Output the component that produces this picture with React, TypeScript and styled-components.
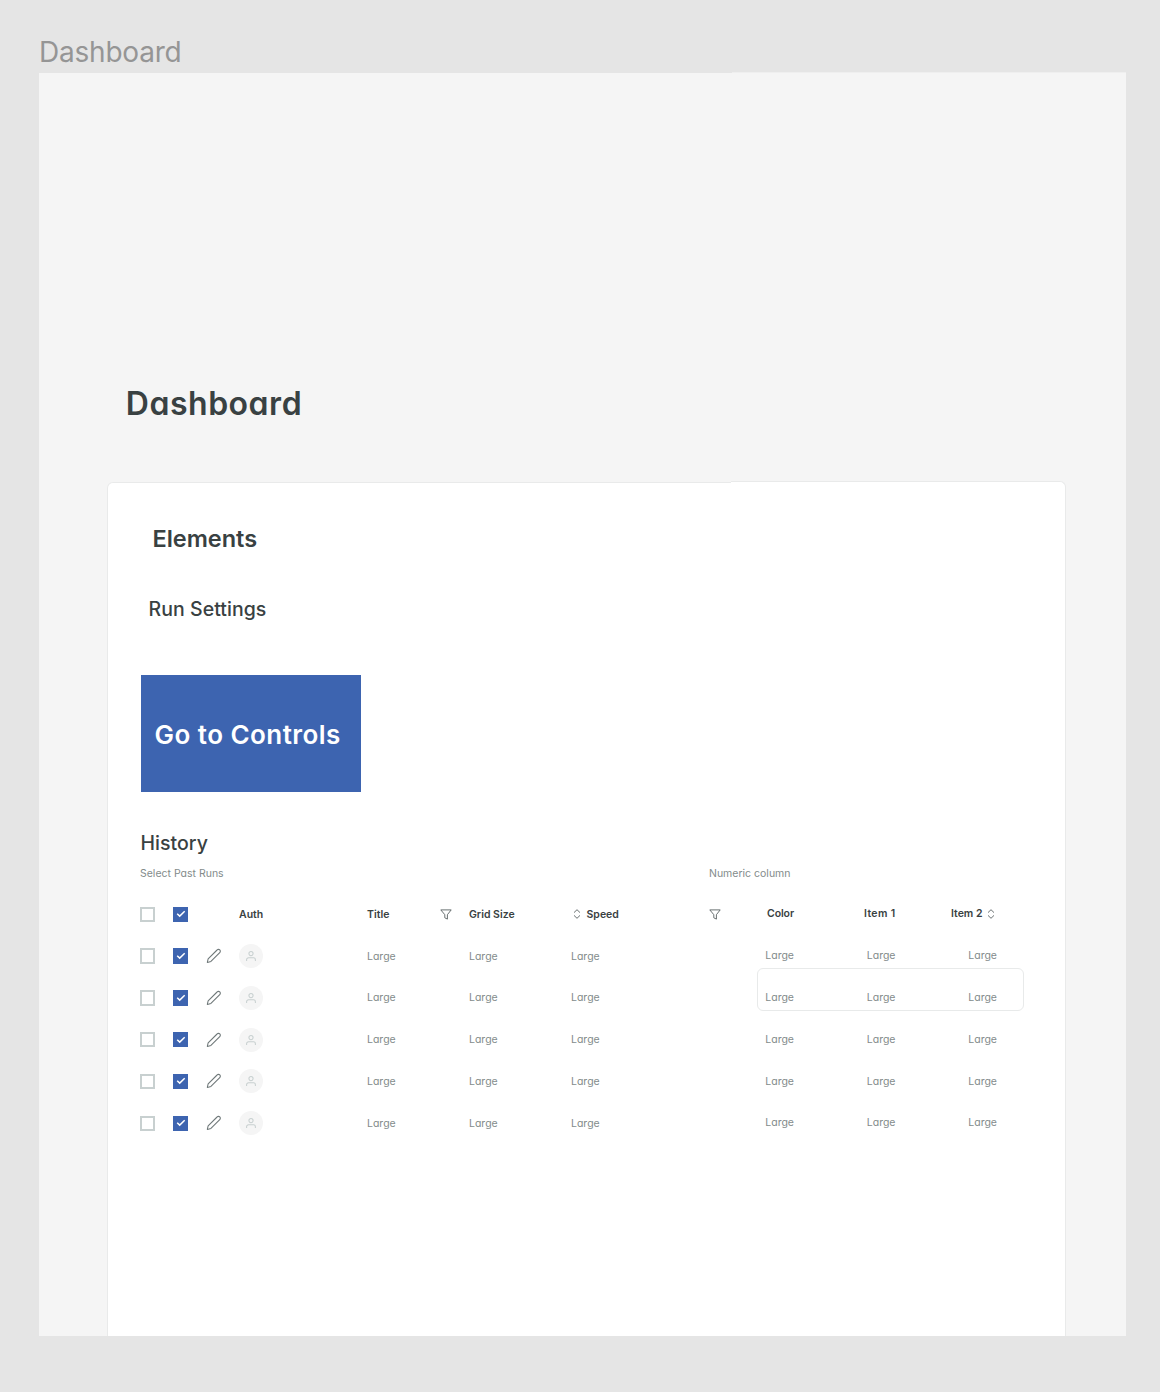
import React from "react";
import styled, { createGlobalStyle } from "styled-components";

const color = {
  canvas: "#e5e5e5",
  frame: "#f5f5f5",
  ink: "#394142",
  muted: "#838b8b",
  line: "#e9eaea",
  outline: "#c8d0d0",
  brand: "#3d64b0",
};

const GlobalStyle = createGlobalStyle`
  body {
    margin: 0;
    background: ${color.canvas};
    color: ${color.ink};
    font-family: Inter, "Open Sans", sans-serif;
  }
  * { box-sizing: border-box; }
  svg { display: block; flex: none; fill: none; }
`;

const Canvas = styled.main`
  width: 1160px;
  height: 1392px;
  padding: 35px 0 0 39px;
  overflow: hidden;
`;

const FrameLabel = styled.div`
  height: 38px;
  font-size: 28px;
  line-height: 34px;
  letter-spacing: -0.22px;
  color: #959595;
`;

const Frame = styled.section`
  position: relative;
  display: flex;
  flex-direction: column;
  width: 1086.5px;
  height: 1263px;
  padding: 310.5px 0 0 68px;
  background: ${color.frame};
  font-feature-settings: "cv11" 1;

  &::before {
    content: "";
    position: absolute;
    top: -1px;
    right: 0;
    width: 394px;
    height: 1px;
    background: #efefef;
  }
`;

const PageTitle = styled.h1`
  margin: 0 0 58.5px 18.8px;
  font-size: 32px;
  font-weight: 600;
  line-height: 40px;
  letter-spacing: 0.52px;
`;

const Card = styled.div`
  position: relative;
  flex: 1;
  width: 959px;
  padding: 41px 0 0 32px;
  background: #fff;
  border: 1px solid ${color.line};
  border-bottom: 0;
  border-radius: 6px 6px 0 0;

  &::before {
    content: "";
    position: absolute;
    top: -2px;
    right: -1px;
    width: 334px;
    height: 8px;
    background: #fff;
    border: solid ${color.line};
    border-width: 1px 1px 0 0;
    border-radius: 0 6px 0 0;
  }
`;

const SectionTitle = styled.h2`
  margin: 0 0 42.6px 12.5px;
  font-size: 23.5px;
  font-weight: 600;
  line-height: 30px;
  letter-spacing: -0.02px;
`;

const SubTitle = styled.h3<{ $indent?: number }>`
  margin: 0 0 0 ${(p) => p.$indent ?? 0}px;
  font-size: 19.5px;
  font-weight: 500;
  line-height: 24px;
  letter-spacing: 0.04px;
`;

const PrimaryButton = styled.button`
  display: block;
  width: 220px;
  height: 117.4px;
  margin: 54px 0 39.2px 1px;
  padding: 3px 0 0 13.6px;
  border: 0;
  background: ${color.brand};
  color: #fff;
  font: 600 26px/32px Inter, sans-serif;
  font-feature-settings: "cv11" 1;
  letter-spacing: 0.45px;
  text-align: left;
`;

const Captions = styled.div`
  display: grid;
  grid-template-columns: 569px 1fr;
  margin: 12px 0 12.2px;
  font-size: 10.5px;
  line-height: 14px;
  color: ${color.muted};
`;

const Caption = styled.span<{ $raised?: boolean }>`
  margin-top: ${(p) => (p.$raised ? -0.6 : 0)}px;
`;

const Table = styled.div`
  position: relative;
`;

const Row = styled.div<{ $head?: boolean }>`
  display: grid;
  grid-template-columns: 33px 33px 33px 128px 73px 29px 102px 138px 48px 37px 101.5px 101.5px;
  align-items: center;
  height: 41.8px;
  font-size: 10.5px;
  line-height: 14px;
  font-weight: ${(p) => (p.$head ? 600 : 400)};
  color: ${(p) => (p.$head ? color.ink : color.muted)};
`;

const Cell = styled.div<{ $start?: number }>`
  display: flex;
  align-items: center;
  gap: 3.5px;
  grid-column-start: ${(p) => p.$start ?? "auto"};
`;

const Label = styled.span`
  margin-top: 1.2px;
`;

const NumericCell = styled(Cell)<{ $spacing?: number }>`
  justify-content: flex-end;
  gap: 2.5px;
  padding-bottom: 1px;
  white-space: nowrap;
  letter-spacing: ${(p) => p.$spacing ?? 0}px;
`;

const Box = styled.span<{ $checked?: boolean }>`
  display: grid;
  place-items: center;
  width: 15.4px;
  height: 15.4px;
  border: 2px solid ${(p) => (p.$checked ? color.brand : color.outline)};
  background: ${(p) => (p.$checked ? color.brand : "#fff")};
`;

const Avatar = styled.span`
  display: grid;
  place-items: center;
  width: 24px;
  height: 24px;
  border-radius: 50%;
  background: ${color.frame};
`;

const Selection = styled.div`
  position: absolute;
  top: 74.8px;
  left: 617px;
  width: 267px;
  height: 43px;
  border: 1px solid #e8eaea;
  border-radius: 6px;
`;

const Check = () => (
  <svg width="10" height="8" viewBox="0 0 10 8" stroke="#fff" strokeWidth="1.5">
    <path d="M1.2 3.7l2.5 2.4L8.7 1.3" />
  </svg>
);

const Pencil = () => (
  <svg width="16" height="16" viewBox="0 0 24 24" stroke="#6f7879" strokeWidth="1.6" strokeLinejoin="round">
    <path d="M16.6 3a2.83 2.83 0 1 1 4 4L7.4 20.2 2 21.6l1.2-5.2L16.6 3z" />
  </svg>
);

const Person = () => (
  <svg width="12" height="12" viewBox="0 0 12 12" stroke={color.outline} strokeWidth="1.05">
    <circle cx="6" cy="3.6" r="2.1" />
    <path d="M1.6 11V9.8a2 2 0 0 1 2-2h4.8a2 2 0 0 1 2 2V11" />
  </svg>
);

const Filter = () => (
  <svg width="12" height="11" viewBox="0 0 12 11" stroke="#596162" strokeWidth="0.9" strokeLinejoin="round">
    <path d="M.8 .9h10.4L7.4 5.7v4.4L4.8 8.8V5.7z" />
  </svg>
);

const Sorter = () => (
  <svg width="12" height="12" viewBox="0 0 12 12" stroke="#596162" strokeWidth="0.9">
    <path d="M3 4.6l3-2.9 3 2.9M3 7.4l3 2.9 3-2.9" />
  </svg>
);

const rows = ["Large", "Large", "Large", "Large", "Large"];

export default function App() {
  return (
    <Canvas>
      <GlobalStyle />
      <FrameLabel>Dashboard</FrameLabel>
      <Frame>
        <PageTitle>Dashboard</PageTitle>
        <Card>
          <SectionTitle>Elements</SectionTitle>
          <SubTitle $indent={8.6}>Run Settings</SubTitle>
          <PrimaryButton>Go to Controls</PrimaryButton>
          <SubTitle $indent={0.5}>History</SubTitle>
          <Captions>
            <Caption>Select Past Runs</Caption>
            <Caption $raised>Numeric column</Caption>
          </Captions>
          <Table>
            <Row $head>
              <Cell><Box /></Cell>
              <Cell><Box $checked><Check /></Box></Cell>
              <Cell $start={4}><Label>Auth</Label></Cell>
              <Cell><Label>Title</Label></Cell>
              <Cell><Filter /></Cell>
              <Cell><Label>Grid Size</Label></Cell>
              <Cell><Sorter /><Label>Speed</Label></Cell>
              <Cell><Filter /></Cell>
              <NumericCell $start={10} $spacing={-0.1}><Label>Color</Label></NumericCell>
              <NumericCell $spacing={0.35}><Label>Item 1</Label></NumericCell>
              <NumericCell><Label>Item 2</Label><Sorter /></NumericCell>
            </Row>
            {rows.map((size, i) => (
              <Row key={i}>
                <Cell><Box /></Cell>
                <Cell><Box $checked><Check /></Box></Cell>
                <Cell><Pencil /></Cell>
                <Cell><Avatar><Person /></Avatar></Cell>
                <Cell><Label>{size}</Label></Cell>
                <Cell $start={7}><Label>{size}</Label></Cell>
                <Cell><Label>{size}</Label></Cell>
                <NumericCell $start={10}><Label>{size}</Label></NumericCell>
                <NumericCell><Label>{size}</Label></NumericCell>
                <NumericCell><Label>{size}</Label></NumericCell>
              </Row>
            ))}
            <Selection />
          </Table>
        </Card>
      </Frame>
    </Canvas>
  );
}
